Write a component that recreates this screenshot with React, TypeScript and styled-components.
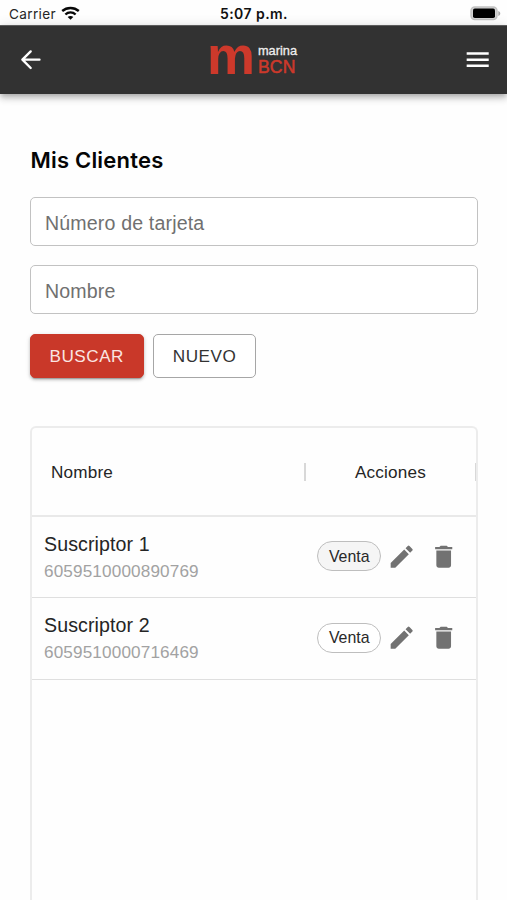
import React from "react";
import styled, { createGlobalStyle } from "styled-components";

const GlobalStyle = createGlobalStyle`
  *, *::before, *::after { box-sizing: border-box; }
  html { overflow: hidden; }
  body { margin: 0; background: #fefefe; font-family: "Liberation Sans", Arial, sans-serif; color: #252525; }
`;

const Screen = styled.div`
  height: 900px;
  overflow: hidden;
  display: flex;
  flex-direction: column;
`;

const StatusBar = styled.div`
  height: 25px;
  flex: none;
  display: grid;
  grid-template-columns: 1fr auto 1fr;
  align-items: center;
  padding: 2px 6px 0 9px;
  font: 400 13.6px/20px Inter, sans-serif;
  color: #262626;
`;

const Carrier = styled.div`
  display: flex;
  align-items: center;
  gap: 5px;
  letter-spacing: 0.35px;
`;

const Clock = styled.div`
  font-weight: 600;
  font-size: 14px;
  letter-spacing: 0.44px;
  padding-right: 2px;
  color: #111;
`;

const BatterySlot = styled.div`
  display: flex;
  justify-content: flex-end;
`;

const AppBar = styled.header`
  height: 69px;
  flex: none;
  display: grid;
  grid-template-columns: 30px 1fr 30px;
  align-items: center;
  padding: 0 14.5px 1px 15.5px;
  background: #323232;
  border-top: 1px solid #5c5c5c;
  box-shadow: 0 2px 5px -1px rgba(0, 0, 0, 0.2), 0 5px 6px rgba(0, 0, 0, 0.14), 0 1px 12px rgba(0, 0, 0, 0.12);
`;

const Icon = styled.svg`
  display: block;
  width: 29.4px;
  height: 29.4px;
  flex: none;
`;

const IconButton = styled.button<{ $color: string }>`
  display: flex;
  padding: 0;
  border: 0;
  background: none;
  color: ${(p) => p.$color};
`;

const Brand = styled.div`
  display: flex;
  justify-content: center;
  align-items: center;
  gap: 3px;
  padding-right: 4px;
`;

const BrandMark = styled.span`
  color: #cd392b;
  font-size: 54px;
  font-weight: 700;
  line-height: 68px;
  height: 68px;
  margin-top: -10px;
`;

const BrandText = styled.div`
  display: flex;
  flex-direction: column;
`;

const BrandTop = styled.span`
  color: #eee;
  font-size: 12.8px;
  line-height: 15px;
  margin-top: -1px;
  margin-bottom: 1px;
  -webkit-text-stroke: 0.3px #eee;
`;

const BrandBottom = styled.span`
  color: #cd392b;
  font-size: 17.6px;
  letter-spacing: 0.2px;
  line-height: 17px;
  -webkit-text-stroke: 0.5px #cd392b;
`;

const Main = styled.main`
  flex: 1;
  min-height: 0;
  padding: 53px 29px 0 30px;
  display: flex;
  flex-direction: column;
`;

const Title = styled.h1`
  margin: 0 0 23px;
  padding-left: 0.5px;
  font: 600 22px/27px Inter, sans-serif;
  letter-spacing: 0.2px;
  color: #050505;
`;

const Input = styled.input`
  width: 100%;
  height: 49px;
  flex: none;
  margin-bottom: 19.4px;
  padding: 3px 14px 0;
  border: 1px solid #c2c2c2;
  border-radius: 5px;
  background: #fff;
  font: 400 19.6px "Liberation Sans", Arial, sans-serif;
  letter-spacing: 0.15px;
  outline: none;
  &::placeholder { color: #707070; opacity: 1; }
`;

const Actions = styled.div`
  display: flex;
  gap: 9.5px;
  margin-bottom: 48px;
`;

const Button = styled.button<{ $primary?: boolean }>`
  width: ${(p) => (p.$primary ? 113.5 : 103)}px;
  height: 44px;
  padding: 1px 0 0;
  border-radius: 5px;
  border: 1px solid ${(p) => (p.$primary ? "#c93829" : "#a6a6a6")};
  background: ${(p) => (p.$primary ? "#c93829" : "#fff")};
  color: ${(p) => (p.$primary ? "#fae5e2" : "#333")};
  box-shadow: ${(p) => (p.$primary ? "0 3px 1px -2px rgba(0,0,0,.2), 0 2px 3px rgba(0,0,0,.18), 0 1px 5px rgba(0,0,0,.12)" : "none")};
  font: 400 17.15px "Liberation Sans", Arial, sans-serif;
  letter-spacing: 0.5px;
  white-space: nowrap;
`;

const Table = styled.section`
  flex: 1;
  border: 2px solid #ececec;
  border-bottom: 0;
  border-radius: 6px 6px 0 0;
`;

const TableHead = styled.div`
  height: 89px;
  padding-top: 1px;
  display: grid;
  grid-template-columns: 274px 1fr;
  align-items: center;
  border-bottom: 2px solid #e9e9e9;
  font-size: 17.15px;
  letter-spacing: 0.18px;
`;

const HeadCell = styled.div<{ $center?: boolean }>`
  height: 18px;
  line-height: 19px;
  padding-left: ${(p) => (p.$center ? 0 : 19)}px;
  text-align: ${(p) => (p.$center ? "center" : "left")};
  border-right: ${(p) => (p.$center ? 1 : 2)}px solid #d8d8d8;
`;

const Row = styled.div`
  height: 81.4px;
  display: flex;
  align-items: center;
  justify-content: space-between;
  padding: 0 17.5px 0 12px;
  border-bottom: 1px solid #dfdfdf;
`;

const Person = styled.div`
  display: flex;
  flex-direction: column;
  gap: 3px;
  padding-top: 0.6px;
`;

const Name = styled.span`
  font-size: 19.6px;
  line-height: 24px;
  letter-spacing: 0.1px;
`;

const CardNumber = styled.span`
  font-size: 17.15px;
  line-height: 24px;
  letter-spacing: 0.14px;
  color: #a2a2a2;
`;

const RowActions = styled.div`
  display: flex;
  align-items: center;
  padding-bottom: 1.4px;
`;

const Chip = styled.button<{ $filled?: boolean }>`
  width: 64px;
  height: 30px;
  margin-right: 6px;
  padding: 1px 0 0;
  border: 1px solid #bebebe;
  border-radius: 15px;
  background: ${(p) => (p.$filled ? "#f5f5f5" : "#fff")};
  color: #292929;
  font: 400 15.9px "Liberation Sans", Arial, sans-serif;
`;

const DeleteButton = styled(IconButton)`
  margin-left: 12.5px;
`;

const BackIcon = () => (
  <Icon viewBox="0 0 24 24" fill="none" stroke="currentColor" strokeWidth="1.9" strokeLinecap="round" strokeLinejoin="round">
    <path d="M19.2 12H5.4M12 5.2 5.2 12l6.8 6.8" />
  </Icon>
);

const MenuIcon = () => (
  <Icon viewBox="0 0 24 24" fill="currentColor">
    <path d="M3 18h18v-2H3v2zm0-5h18v-2H3v2zm0-7v2h18V6H3z" />
  </Icon>
);

const EditIcon = () => (
  <Icon viewBox="0 0 24 24" fill="currentColor">
    <path d="M3 17.25V21h3.75L17.81 9.94l-3.75-3.75L3 17.25zM20.71 7.04c.39-.39.39-1.02 0-1.41l-2.34-2.34a.9959.9959 0 0 0-1.41 0l-1.83 1.83 3.75 3.75 1.83-1.83z" />
  </Icon>
);

const TrashIcon = () => (
  <Icon viewBox="0 0 24 24" fill="currentColor">
    <path d="M6 19c0 1.1.9 2 2 2h8c1.1 0 2-.9 2-2V7H6v12zM19 4h-3.5l-1-1h-5l-1 1H5v2h14V4z" />
  </Icon>
);

const WifiIcon = () => (
  <svg width="19" height="15" viewBox="0 0 19 15" fill="none" stroke="#080808" strokeWidth="2.4">
    <path d="M1.2 5C5.9.9 13.1.9 17.8 5M4.4 8.5c2.9-2.8 7.3-2.8 10.2 0" />
    <path d="M9.5 13.8 6.7 11c1.6-1.5 4-1.5 5.6 0z" fill="#080808" stroke="none" />
  </svg>
);

const BatteryIcon = () => (
  <svg width="31" height="15" viewBox="0 0 31 15">
    <rect x="1" y="1" width="26" height="12.6" rx="3.8" fill="#d4d4d4" stroke="#c2c2c2" strokeWidth="1.4" />
    <rect x="3" y="2.6" width="22" height="9.4" rx="1.8" fill="#000" />
    <path d="M28.3 5c2.6 1 2.6 4 0 5z" fill="#a8a8a8" />
  </svg>
);

const clients = [
  { name: "Suscriptor 1", card: "6059510000890769", filled: true },
  { name: "Suscriptor 2", card: "6059510000716469", filled: false },
];

export default function App() {
  return (
    <Screen>
      <GlobalStyle />
      <StatusBar>
        <Carrier>Carrier <WifiIcon /></Carrier>
        <Clock>5:07 p.m.</Clock>
        <BatterySlot><BatteryIcon /></BatterySlot>
      </StatusBar>
      <AppBar>
        <IconButton $color="#fff" aria-label="Volver"><BackIcon /></IconButton>
        <Brand>
          <BrandMark>m</BrandMark>
          <BrandText>
            <BrandTop>marina</BrandTop>
            <BrandBottom>BCN</BrandBottom>
          </BrandText>
        </Brand>
        <IconButton $color="#fff" aria-label="Menú"><MenuIcon /></IconButton>
      </AppBar>
      <Main>
        <Title>Mis Clientes</Title>
        <Input placeholder="Número de tarjeta" />
        <Input placeholder="Nombre" />
        <Actions>
          <Button $primary>BUSCAR</Button>
          <Button>NUEVO</Button>
        </Actions>
        <Table>
          <TableHead>
            <HeadCell>Nombre</HeadCell>
            <HeadCell $center>Acciones</HeadCell>
          </TableHead>
          {clients.map((c) => (
            <Row key={c.card}>
              <Person>
                <Name>{c.name}</Name>
                <CardNumber>{c.card}</CardNumber>
              </Person>
              <RowActions>
                <Chip $filled={c.filled}>Venta</Chip>
                <IconButton $color="#727272" aria-label="Editar"><EditIcon /></IconButton>
                <DeleteButton $color="#727272" aria-label="Eliminar"><TrashIcon /></DeleteButton>
              </RowActions>
            </Row>
          ))}
        </Table>
      </Main>
    </Screen>
  );
}
